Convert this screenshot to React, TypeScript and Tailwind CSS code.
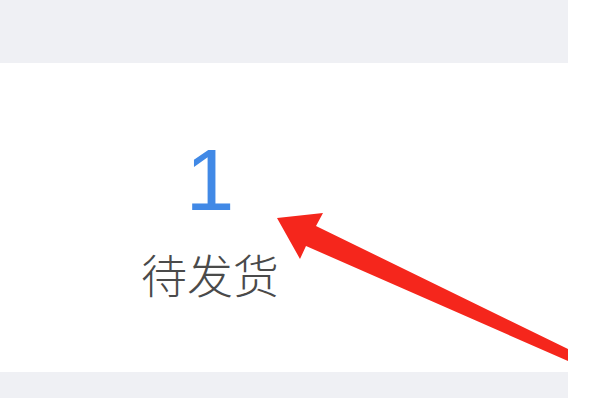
import React from "react"

const Arrow = () => (
  <svg className="pointer-events-none absolute left-0 top-0" width="600" height="400" viewBox="0 0 600 400">
    <polygon points="277,218 323,213 316,226 568,349 568,361 306,246 300,259" fill="#f5261c" />
  </svg>
)

export default function App() {
  return (
    <div className="relative h-[400px] w-[600px] overflow-hidden bg-white">
      <div className="flex w-[568px] flex-col">
        <div className="h-[63px] bg-[#eff0f4]" />
        <div className="flex h-[309px] bg-white">
          <div className="flex w-[420px] flex-col items-center pt-[73px]">
            <span className="font-['Liberation_Sans',sans-serif] text-[88px] font-light leading-none text-[#4189e6]">1</span>
            <span className="mt-[26px] font-['Noto_Sans_CJK_SC',sans-serif] text-[46px] font-light leading-none text-[#4a4a4a]">待发货</span>
          </div>
        </div>
        <div className="h-[26px] bg-[#eff0f4]" />
      </div>
      <Arrow />
    </div>
  )
}
